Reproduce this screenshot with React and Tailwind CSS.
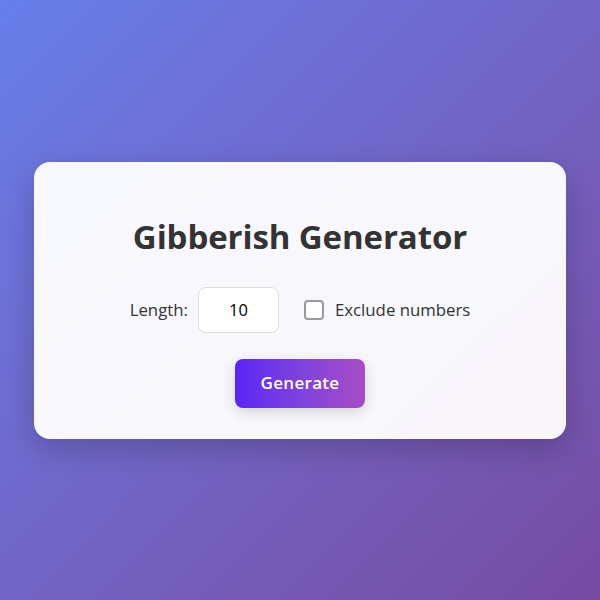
import React, { useState } from 'react';

export default function App() {
  const [length, setLength] = useState('10');
  const [exclude, setExclude] = useState(false);

  return (
    <div
      className="w-[600px] h-[600px] flex items-center justify-center bg-gradient-to-br from-[#667eea] to-[#764ba2]"
      style={{ fontFamily: '"Open Sans", "Noto Sans", sans-serif' }}
    >
      <div className="w-[532px] h-[277px] bg-white/95 rounded-2xl shadow-[0_10px_30px_rgba(0,0,0,0.2)] flex flex-col items-center pt-[55px]">
        <h1 className="text-[33px] leading-[40px] font-bold text-[#333] tracking-[-0.1px]">Gibberish Generator</h1>

        <div className="flex items-center mt-[30px] h-[46px] text-[16.8px] text-[#333]">
          <label className="mr-[10px]">Length:</label>
          <input
            type="number"
            value={length}
            onChange={(e) => setLength(e.target.value)}
            className="w-[81px] h-[46px] border border-[#ddd] rounded-lg bg-white text-center text-[16.5px] text-black outline-none [appearance:textfield] [&::-webkit-inner-spin-button]:appearance-none"
          />
          <label className="flex items-center ml-[25px] cursor-pointer">
            <input
              type="checkbox"
              checked={exclude}
              onChange={() => setExclude(!exclude)}
              className="appearance-none w-[20px] h-[20px] border-2 border-[#9a9a9a] rounded-[4px] bg-white mr-[11px]"
            />
            <span>Exclude numbers</span>
          </label>
        </div>

        <button className="mt-[26px] w-[130px] h-[49px] rounded-lg bg-gradient-to-r from-[#5b22f5] to-[#a64cc5] text-white font-semibold text-[17px] tracking-[0.3px] shadow-[0_4px_14px_rgba(0,0,0,0.15)]">
          Generate
        </button>
      </div>
    </div>
  );
}
